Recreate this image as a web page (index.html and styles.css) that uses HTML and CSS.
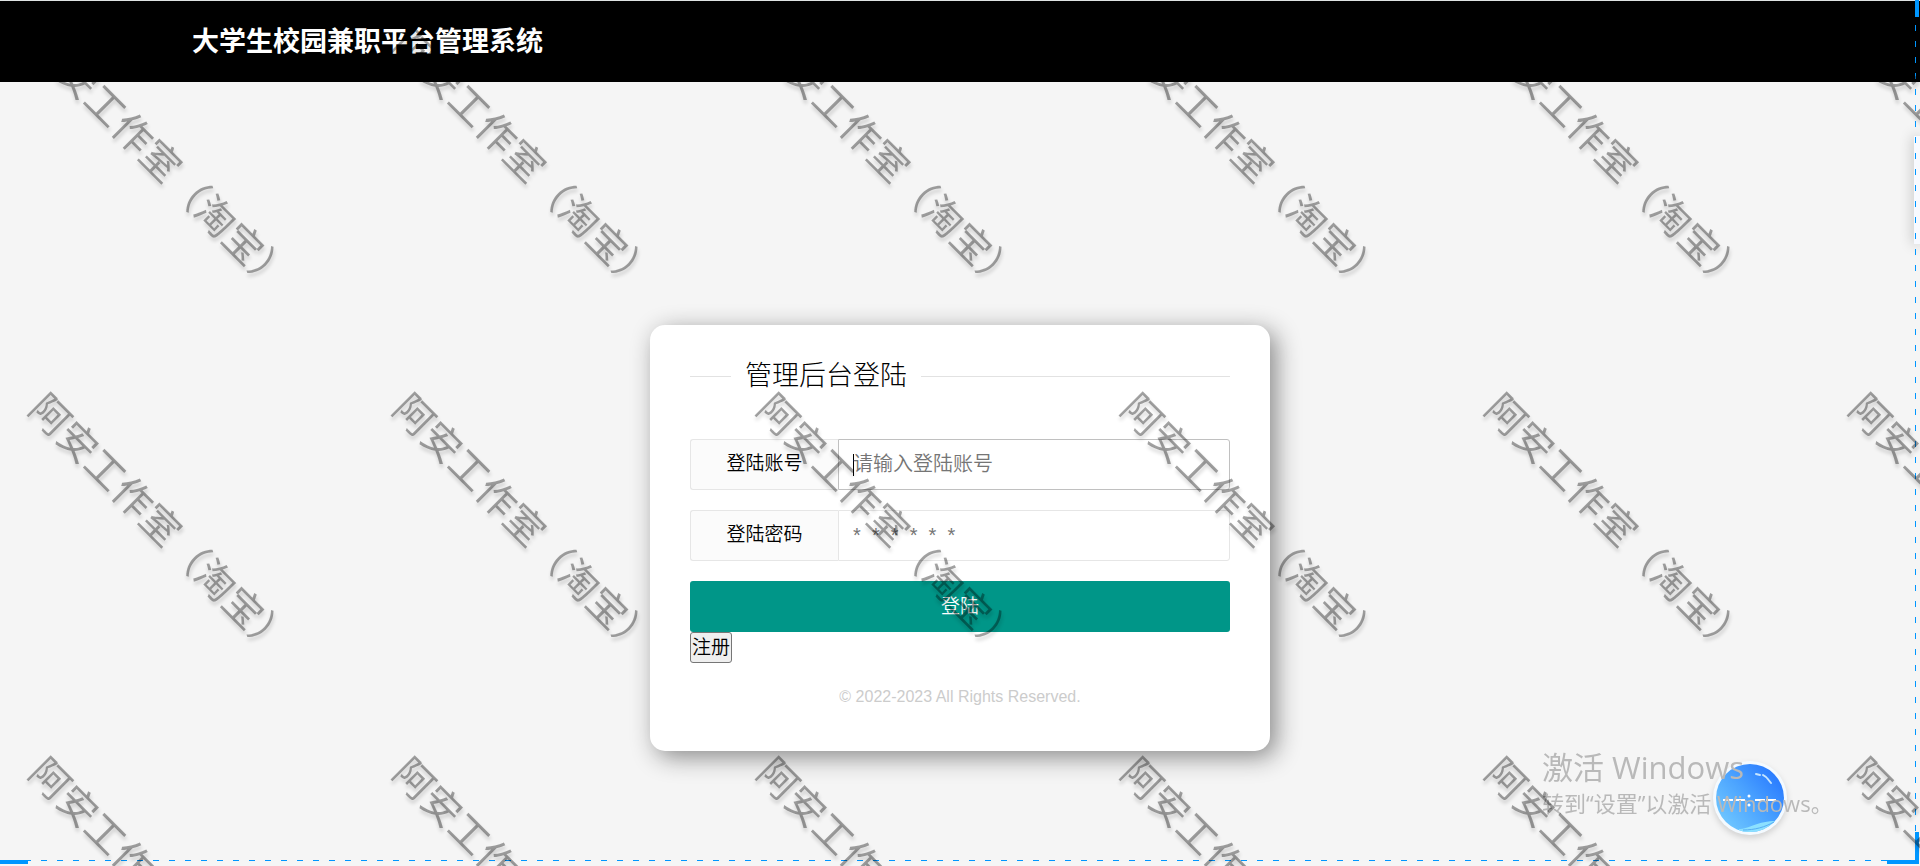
FILE: index.html
```
<!DOCTYPE html>
<html lang="zh-CN">
<head>
  <meta charset="UTF-8">
  <title>大学生校园兼职平台管理系统</title>
  <link rel="stylesheet" href="styles.css">
</head>
<body>

  <header class="header">
    <h1>大学生校园兼职平台管理系统</h1>
  </header>

  <main class="main">
    <form class="login-box" action="#" method="post">
      <h2 class="login-title"><span>管理后台登陆</span></h2>

      <div class="form-item">
        <label for="username">登陆账号</label>
        <input class="active" type="text" id="username" name="username" placeholder="请输入登陆账号">
      </div>

      <div class="form-item">
        <label for="password">登陆密码</label>
        <input type="password" id="password" name="password" placeholder="*&nbsp;&nbsp;*&nbsp;&nbsp;*&nbsp;&nbsp;*&nbsp;&nbsp;*&nbsp;&nbsp;*">
      </div>

      <button class="login-button" type="submit">登陆</button>
      <button class="register-button" type="button">注册</button>

      <p class="copyright">© 2022-2023 All Rights Reserved.</p>
    </form>
  </main>

  <div class="side-panel"></div>

  <!-- 悬浮球 -->
  <svg class="ball" viewBox="0 0 90 90" aria-hidden="true">
    <defs>
      <linearGradient id="ball-color" x1="0.1" y1="0.8" x2="0.85" y2="0.15">
        <stop offset="0" stop-color="#6cc4ff"/>
        <stop offset="0.5" stop-color="#4ba3ff"/>
        <stop offset="1" stop-color="#2b7dff"/>
      </linearGradient>
      <clipPath id="ball-clip"><circle cx="45" cy="45" r="34"/></clipPath>
    </defs>
    <circle cx="45" cy="45" r="37" fill="#f4faff"/>
    <circle cx="45" cy="45" r="34" fill="url(#ball-color)"/>
    <path clip-path="url(#ball-clip)" d="M34 76C44 76 52 68 72 68V82H34Z" fill="#8ce0ff"/>
    <path d="M38 77C50 77 60 74 69 69" fill="none" stroke="#55adf5" stroke-width="1"/>
    <path d="M51 21l4 1M58 22l3 2M62 25l4 5" fill="none" stroke="#c5e5ff" stroke-width="2" stroke-linecap="round"/>
    <path d="M18 47h10M30 47h10M50 47h10M61 47h10" fill="none" stroke="#fff" stroke-width="2"/>
    <circle cx="44" cy="43" r="1.5" fill="#fff"/>
    <circle cx="44" cy="52" r="1.5" fill="#fff"/>
  </svg>

  <div class="activate">
    <p class="activate-title">激活 Windows</p>
    <p class="activate-text">转到“设置”以激活 Windows。</p>
  </div>

  <!-- 选区边框 -->
  <div class="frame">
    <i class="corner corner-top"></i>
    <i class="corner corner-left"></i>
    <i class="corner corner-right"></i>
  </div>

  <!-- 水印 -->
  <div class="watermark" aria-hidden="true">
    <div><span>阿安工作室（淘宝）</span></div>
    <div><span>阿安工作室（淘宝）</span></div>
    <div><span>阿安工作室（淘宝）</span></div>
    <div><span>阿安工作室（淘宝）</span></div>
    <div><span>阿安工作室（淘宝）</span></div>
    <div><span>阿安工作室（淘宝）</span></div>
    <div><span>阿安工作室（淘宝）</span></div>
    <div><span>阿安工作室（淘宝）</span></div>
    <div><span>阿安工作室（淘宝）</span></div>
    <div><span>阿安工作室（淘宝）</span></div>
    <div><span>阿安工作室（淘宝）</span></div>
    <div><span>阿安工作室（淘宝）</span></div>
    <div><span>阿安工作室（淘宝）</span></div>
    <div><span>阿安工作室（淘宝）</span></div>
    <div><span>阿安工作室（淘宝）</span></div>
    <div><span>阿安工作室（淘宝）</span></div>
    <div><span>阿安工作室（淘宝）</span></div>
    <div><span>阿安工作室（淘宝）</span></div>
  </div>

</body>
</html>
```
FILE: styles.css
```
* {
  box-sizing: border-box;
}

body {
  margin: 0;
  min-height: 100vh;
  background-color: #f5f5f5;
  color: #000;
  font-family: "Liberation Sans", "Noto Sans CJK SC", sans-serif;
  font-size: 19px;
  font-weight: 350;
}

h1, h2, p {
  margin: 0;
}

input, button {
  font-family: inherit;
  font-weight: inherit;
}

.header {
  display: flex;
  align-items: center;
  height: 82px;
  padding: 0 10%;
  border-top: 1px solid #dfe3e3;
  background-color: #000;
  color: #fff;
}

.header h1 {
  font-size: 27px;
  line-height: 40px;
}

/* 登陆框 */
.main {
  padding-top: 243px;
}

.login-box {
  max-width: 620px;
  margin: 0 auto;
  padding: 31px 40px 40px;
  border-radius: 15px;
  background-color: #fff;
  box-shadow: 6px 6px 24px #888;
}

.login-title {
  display: flex;
  align-items: center;
  height: 40px;
  margin-bottom: 43px;
  font-size: 27px;
  font-weight: 300;
  line-height: 40px;
}

.login-title::before,
.login-title::after {
  content: "";
  height: 1px;
  background-color: #e2e2e2;
}

.login-title::before {
  width: 41px;
}

.login-title::after {
  flex: 1;
}

.login-title span {
  padding: 0 14px;
}

.form-item {
  display: flex;
  height: 51px;
  margin-bottom: 20px;
}

.form-item label {
  width: 148px;
  border: 1px solid #e6e6e6;
  border-right: none;
  border-radius: 3px 0 0 3px;
  background-color: #fbfbfb;
  line-height: 47px;
  text-align: center;
}

.form-item input {
  flex: 1;
  min-width: 0;
  padding: 0 14px;
  border: 1px solid #e6e6e6;
  border-radius: 0 3px 3px 0;
  background-color: #fff;
  font-size: 20px;
  outline: none;
}

.form-item input::placeholder {
  color: #757575;
}

.form-item input.active {
  border-color: #c0c0c0;
  background-image: linear-gradient(#000, #000);
  background-position: 14px center;
  background-repeat: no-repeat;
  background-size: 1px 22px;
}

.login-button {
  display: block;
  width: 100%;
  height: 51px;
  padding: 0 0 4px;
  border: none;
  border-radius: 3px;
  background-color: #009688;
  color: #fff;
  font-size: 19px;
  cursor: pointer;
}

.register-button {
  display: block;
  height: 31px;
  padding: 0 1px;
  border: 1px solid #767676;
  border-radius: 3px;
  background-color: #efefef;
  color: #000;
  font-size: 19px;
  line-height: 27px;
}

.copyright {
  margin-top: 20px;
  color: #ccc;
  font-size: 16px;
  line-height: 28px;
  text-align: center;
}

/* 右侧面板 */
.side-panel {
  position: fixed;
  top: 136px;
  right: 0;
  width: 6px;
  height: 108px;
  background-color: #f8faff;
  box-shadow: 0 0 14px rgba(0, 0, 0, 0.3);
}

.ball {
  position: fixed;
  right: 125px;
  bottom: 23px;
  width: 90px;
  height: 90px;
  filter: drop-shadow(0 3px 3px rgba(0, 0, 0, 0.15));
}

.activate {
  position: fixed;
  right: 92px;
  bottom: 47px;
  width: 286px;
  color: #b9b9b9;
  font-family: "Open Sans", "Noto Sans CJK SC", sans-serif;
  font-weight: 400;
  white-space: nowrap;
}

.activate-title {
  font-size: 31px;
  line-height: 40px;
}

.activate-text {
  font-size: 22px;
  line-height: 32px;
}

/* 虚线边框 */
.frame {
  position: fixed;
  inset: 0 4px 5px 0;
  background-image:
    linear-gradient(to right, transparent 9px, #0096ff 9px, #0096ff 15px, transparent 15px),
    linear-gradient(to bottom, transparent 9px, #0096ff 9px, #0096ff 15px, transparent 15px);
  background-position: left bottom, right top;
  background-repeat: repeat-x, repeat-y;
  background-size: 16px 1px, 1px 16px;
  pointer-events: none;
}

.corner {
  position: absolute;
  background-color: #0096ff;
}

.corner-top {
  top: 0;
  right: -3px;
  width: 4px;
  height: 17px;
}

.corner-left {
  bottom: -3px;
  left: 0;
  width: 28px;
  height: 4px;
}

.corner-right {
  right: -3px;
  bottom: -3px;
  width: 32px;
  height: 32px;
  border: solid #0096ff;
  border-width: 0 4px 4px 0;
  background-color: transparent;
}

/* 水印 */
.watermark {
  position: fixed;
  inset: -23px 0 0 -19px;
  display: grid;
  grid-template-columns: repeat(6, 364px);
  grid-auto-rows: 364px;
  overflow: hidden;
  color: rgba(0, 0, 0, 0.36);
  font-family: "Noto Sans CJK SC", sans-serif;
  font-size: 39px;
  font-weight: 400;
  line-height: 48px;
  text-shadow: 3px 2px 4px rgba(0, 0, 0, 0.16);
  white-space: nowrap;
  pointer-events: none;
}

.watermark div {
  display: flex;
  align-items: center;
  justify-content: center;
}

.watermark span {
  transform: rotate(45deg);
}
```
